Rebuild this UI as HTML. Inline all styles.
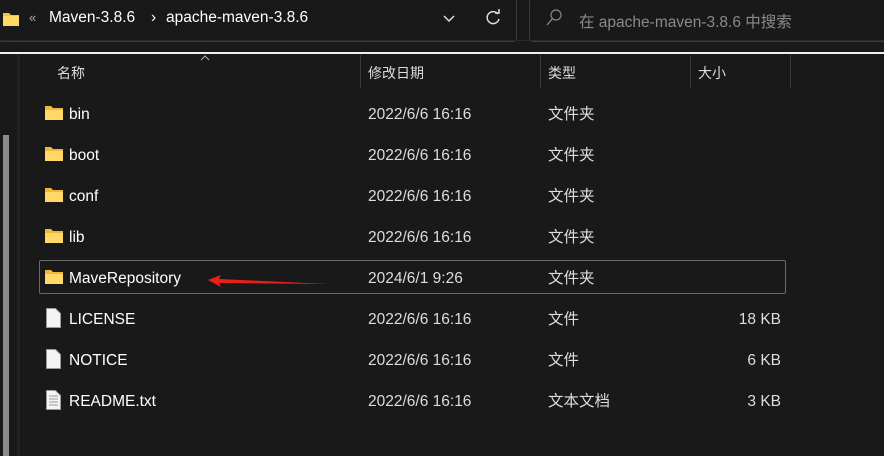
<!DOCTYPE html>
<html><head><meta charset="utf-8"><style>
body{margin:0;width:884px;height:456px;background:#191919;position:relative;overflow:hidden;font-family:"Segoe UI","Liberation Sans","Noto Sans CJK SC",sans-serif;color:#fff;font-size:15.5px}
.a{position:absolute}
.row{position:absolute;left:0;width:884px;height:20px}
.row span{position:absolute;top:2px;line-height:20px;white-space:nowrap}
.sep{position:absolute;top:55px;width:1px;height:33px;background:#3a3a3a}
</style></head><body>
<div class="a" style="left:-2px;top:-2px;width:517px;height:42px;border:1px solid #3a3a3a;border-radius:4px"></div>
<div class="a" style="left:529px;top:-2px;width:580px;height:42px;border:1px solid #3a3a3a;border-radius:4px"></div>
<svg class="a" style="left:3px;top:11px" width="16" height="15"><path d="M0 2h6l2 2h8v11H0z" fill="#f1c24a"/><path d="M0 5h16v10H0z" fill="#ffd966"/></svg>
<span class="a" style="left:29px;top:10px;color:#aaa;font-size:13px">«</span>
<span class="a" style="left:49px;top:9px">Maven-3.8.6</span>
<span class="a" style="left:151px;top:9px">›</span>
<span class="a" style="left:166px;top:9px">apache-maven-3.8.6</span>
<svg class="a" style="left:442px;top:14px" width="14" height="10"><path d="M2 2l5 5 5-5" stroke="#ddd" stroke-width="1.5" fill="none"/></svg>
<svg class="a" style="left:485px;top:9px" width="16" height="18"><path d="M13 5A6 6 0 1 0 14 10" stroke="#ddd" stroke-width="1.5" fill="none"/><path d="M10 4h4V0" stroke="#ddd" stroke-width="1.5" fill="none"/></svg>
<svg class="a" style="left:546px;top:9px" width="16" height="18"><circle cx="10" cy="6" r="5" stroke="#888" stroke-width="1.2" fill="none"/><path d="M6.5 9.5L1 16" stroke="#888" stroke-width="1.3"/></svg>
<span class="a" style="left:579px;top:10px;color:#8a8a8a">在 apache-maven-3.8.6 中搜索</span>
<div class="a" style="left:0;top:40px;width:884px;height:1px;background:#2a2a2a"></div>
<div class="a" style="left:0;top:52px;width:884px;height:2px;background:#f0f0f0"></div>
<div class="a" style="left:17px;top:54px;width:3px;height:402px;background:#222"></div>
<div class="a" style="left:3px;top:135px;width:6px;height:321px;background:#8b8b8b"></div>
<svg class="a" style="left:200px;top:55px" width="10" height="6"><path d="M1 5l4-4 4 4" stroke="#aaa" fill="none"/></svg>
<span class="a" style="left:57px;top:63px;color:#ddd;font-size:14px">名称</span>
<span class="a" style="left:368px;top:63px;color:#ddd;font-size:14px">修改日期</span>
<span class="a" style="left:548px;top:63px;color:#ddd;font-size:14px">类型</span>
<span class="a" style="left:698px;top:63px;color:#ddd;font-size:14px">大小</span>
<div class="sep" style="left:360px"></div><div class="sep" style="left:540px"></div><div class="sep" style="left:690px"></div><div class="sep" style="left:790px"></div>
<div class="a" style="left:39px;top:260px;width:745px;height:32px;border:1px solid #6a6a6a;border-radius:2px"></div>
<svg class="a" style="left:208px;top:275px" width="122" height="12"><path d="M0 5L13 0 11 4 120 9 11 8 13 12z" fill="#e8201c"/></svg>
<div id="rows"></div>
<script>
var R=[["bin","2022/6/6 16:16","文件夹","",0],["boot","2022/6/6 16:16","文件夹","",0],["conf","2022/6/6 16:16","文件夹","",0],["lib","2022/6/6 16:16","文件夹","",0],["MaveRepository","2024/6/1 9:26","文件夹","",0],["LICENSE","2022/6/6 16:16","文件","18 KB",1],["NOTICE","2022/6/6 16:16","文件","6 KB",1],["README.txt","2022/6/6 16:16","文本文档","3 KB",2]];
var h="";R.forEach(function(r,i){var y=103+41*i;var ic=r[4]==0?'<svg style="position:absolute;left:45px;top:2px" width="18" height="15"><path d="M0 1h6l2 2h10v12H0z" fill="#f1b73a"/><path d="M0 5h18v10H0z" fill="#ffd867"/></svg>':'<svg style="position:absolute;left:46px;top:0" width="15" height="20"><path d="M0.5 0.5h9l5 5v14h-14z" fill="#f4f4f4" stroke="#999"/>'+(r[4]==2?'<path d="M3 6h9M3 9h9M3 12h9M3 15h9" stroke="#999"/>':'')+'</svg>';
h+='<div class="row" style="top:'+y+'px">'+ic+'<span style="left:69px">'+r[0]+'</span><span style="left:368px;color:#ddd">'+r[1]+'</span><span style="left:548px;color:#ddd">'+r[2]+'</span><span style="right:103px;color:#ddd">'+r[3]+'</span></div>';});
document.getElementById("rows").innerHTML=h;
</script>
</body></html>
